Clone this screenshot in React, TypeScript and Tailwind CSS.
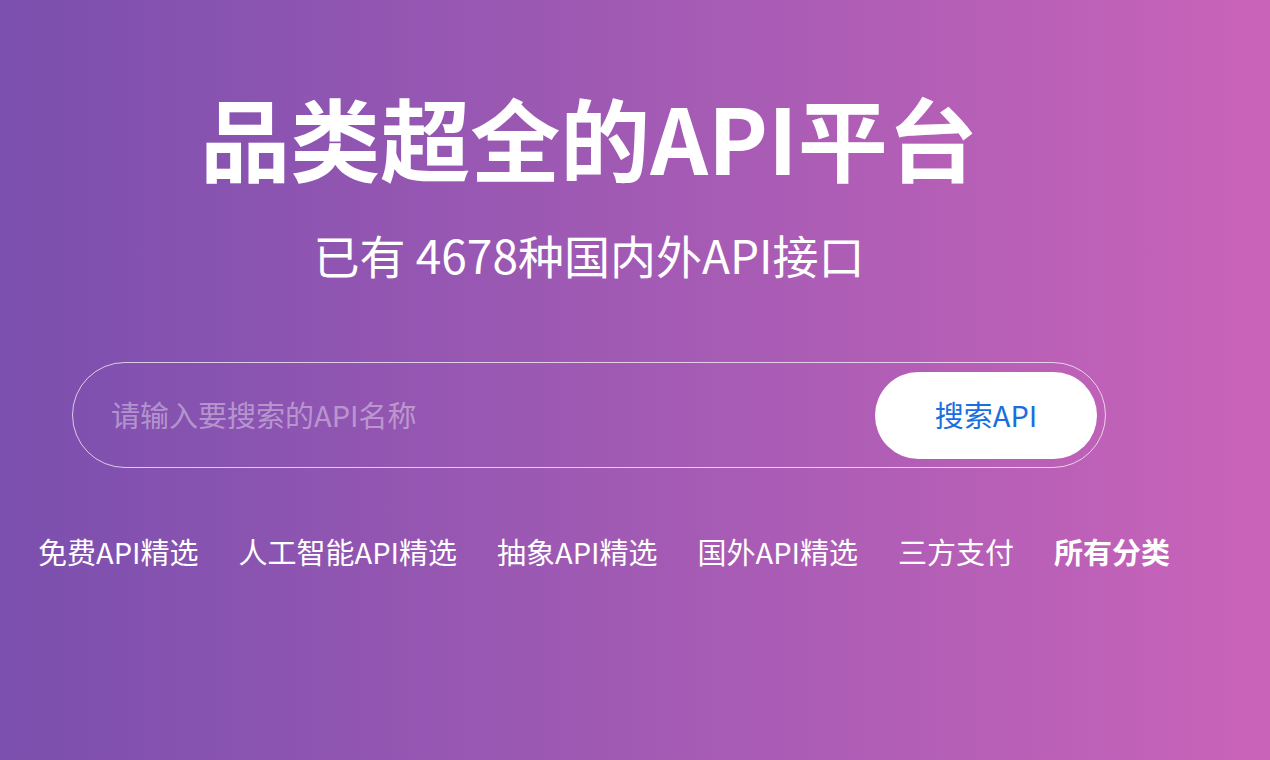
import React from "react";

const categories = [
  { label: "免费API精选" },
  { label: "人工智能API精选" },
  { label: "抽象API精选" },
  { label: "国外API精选" },
  { label: "三方支付" },
  { label: "所有分类", bold: true },
];

export default function App() {
  return (
    <div
      className="min-h-[760px] w-full bg-gradient-to-r from-[#7b4fae] to-[#c963b9] text-white overflow-hidden"
      style={{ fontFamily: '"Noto Sans CJK SC", "Noto Sans", sans-serif' }}
    >
      <div className="ml-[72px] w-[1034px] flex flex-col items-center pt-[91px]">
        <h1 className="text-[90px] font-bold leading-none">品类超全的API平台</h1>
        <p className="mt-[50px] text-[46px] leading-none">已有 4678种国内外API接口</p>

        <div className="mt-[85px] w-full h-[106px] rounded-full border border-white/70 flex items-center pl-[38px] pr-[8px]">
          <input
            className="flex-1 bg-transparent outline-none text-[29px] text-white placeholder:text-white/40"
            placeholder="请输入要搜索的API名称"
          />
          <button className="w-[222px] h-[87px] rounded-full bg-white text-[#1a6fe0] text-[29px]">
            搜索API
          </button>
        </div>
      </div>

      <div className="ml-[38px] mt-[69px] flex items-center gap-[40px] text-[29px] leading-none">
        {categories.map((c) => (
          <a key={c.label} className={c.bold ? "font-bold" : ""}>
            {c.label}
          </a>
        ))}
      </div>
    </div>
  );
}
